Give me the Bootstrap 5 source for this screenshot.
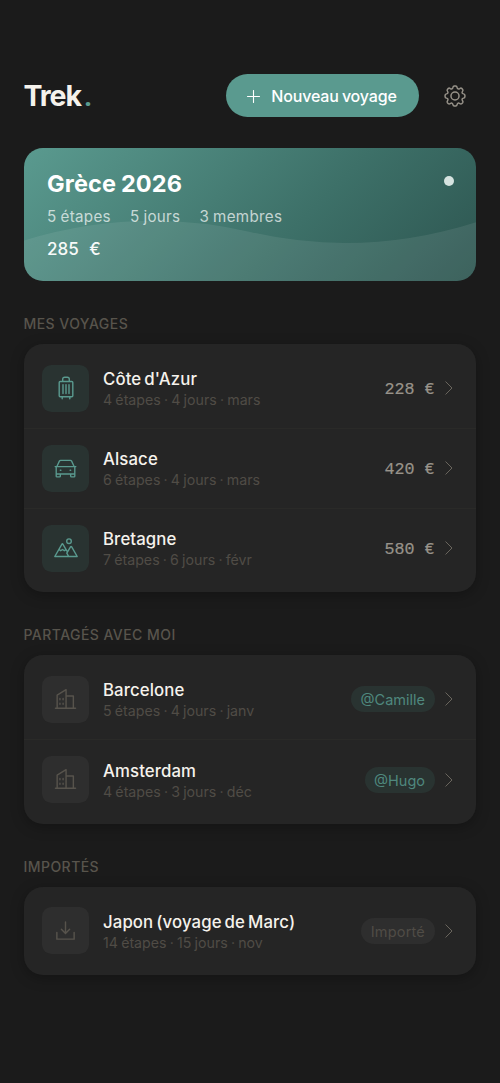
<!DOCTYPE html>
<html lang="fr" data-bs-theme="dark">
<head>
<meta charset="utf-8">
<meta name="viewport" content="width=device-width, initial-scale=1">
<title>Trek</title>
<link href="https://cdn.jsdelivr.net/npm/bootstrap@5.3.0/dist/css/bootstrap.min.css" rel="stylesheet">
<style>
  :root { --teal: #5a9a8f; --muted: #504c46; --soft: #98938a; }
  body { background: #1b1b1b; color: #f5f2ec; font-family: "Inter", "Open Sans", sans-serif; min-height: 1083px; }
  svg { display: block; fill: none; stroke: currentColor; stroke-linecap: round; stroke-linejoin: round; }
  .screen { padding: 74px 24px 0 23.5px; }
  .topbar { height: 43px; }
  .brand-name { font-size: 28.5px; font-weight: 700; line-height: 43px; letter-spacing: -1.1px; }
  .brand-name span { font-family: Roboto, sans-serif; line-height: 1; color: var(--teal); margin-left: 3px; }
  .btn-new { --bs-btn-color: #fff; --bs-btn-bg: var(--teal); --bs-btn-border-width: 0; width: 193px; height: 43px; border-radius: 22px; font-size: 16px; font-weight: 500; letter-spacing: -.15px; word-spacing: -1px; padding: 1px 0 0; gap: 11px; }
  .btn-gear { width: 43px; height: 43px; color: var(--soft); margin-left: 14.5px; }
  .hero { margin-top: 31px; height: 133px; border-radius: 19px; overflow: hidden; background: linear-gradient(135deg, #5a9a8f 0%, #3d7068 60%, #2d5550 100%); }
  .hero-wave { width: 100%; height: 100%; }
  .hero-body { padding: 22px 23.5px; }
  .hero h1 { font-size: 23.5px; font-weight: 700; line-height: 28px; letter-spacing: .15px; word-spacing: -1px; margin: 0; }
  .hero-meta { gap: 19px; font-size: 15.2px; letter-spacing: .3px; word-spacing: -.6px; line-height: 20px; margin-top: 9px; color: rgba(255,255,255,.7); }
  .hero-price { font-size: 17px; font-weight: 500; line-height: 22px; margin-top: 11px; color: #f7faf9; word-spacing: 6px; }
  .hero-dot { width: 10px; height: 10px; margin: 27.500px 22.5px 0 0; background: #d6e3e0; }
  .group-title { font-size: 14px; font-weight: 500; line-height: 20px; letter-spacing: .45px; color: #58544c; margin: 33px 0 10px; }
  .trips { --bs-list-group-bg: transparent; background: #252525; border-radius: 19px; padding: 4.5px 0 3.3px; box-shadow: 0 3px 14px rgba(0,0,0,.28); }
  .trip { height: 80.2px; padding: 0 22.5px 0 18.5px; border: 0; border-bottom: 1px solid #2a2a28; background: none; color: inherit; }
  .trip:last-child { border-bottom-color: transparent; }
  .tile { width: 47px; height: 47px; border-radius: 9.5px; background: #2e2e2e; color: #57534c; margin-right: 14px; }
  .tile-own { background: #293331; color: var(--teal); }
  .trip-text { padding-top: 2px; }
  .trip-name { font-size: 16.8px; font-weight: 500; line-height: 22px; letter-spacing: .1px; word-spacing: -1.6px; }
  .trip-meta { font-size: 14.2px; line-height: 20px; word-spacing: -.8px; color: var(--muted); }
  .price { font-family: "Liberation Mono", monospace; font-size: 16.7px; color: var(--soft); padding-top: 2px; -webkit-text-stroke: .2px currentColor; }
  .tag { height: 26px; line-height: 27px; padding: 0 9.5px; border-radius: 13px; font-size: 14.5px; background: #2e2e2e; color: var(--muted); }
  .tag-plain { letter-spacing: .2px; }
  .tag-user { background: #293331; color: #4f887e; }
  .chev { width: 8px; height: 14px; margin-left: 10.5px; color: #6a665e; margin-right: .5px; }
</style>
</head>
<body>
<svg width="0" height="0" class="position-absolute">
  <symbol id="i-bag" viewBox="0 0 24 24"><path d="M8.700 5.500V3.200Q8.700 1.200 10.700 1.200h2.600Q15.300 1.200 15.300 3.200V5.500M6.200 5.500h11.600q1 0 1 1v13.200q0 1-1 1H6.200q-1 0-1-1V6.500q0-1 1-1zM9 8.600v9M12 8.600v9M15 8.600v9M8.200 20.700v2.100M15.800 20.700v2.100"/></symbol>
  <symbol id="i-car" viewBox="0 0 24 24"><path d="M1.200 10h1.800M21 10h1.800M3 10 5.600 4.300q.4-.8 1.300-.8h10.200q.9 0 1.300.8L21 10M3 10h18q.7 0 .7.800V20q0 .800-.8.800h-2.700q-.8 0-.8-.800v-2.300H6.600V20q0 .800-.8.800H3.100q-.8 0-.8-.800v-9.200q0-.8.700-.8zM2.300 17.700h19.400M6.600 13.800h.6M16.800 13.800h.6"/></symbol>
  <symbol id="i-mount" viewBox="0 0 24 24"><path d="M.8 20.500 7.800 8.300q.6-1 1.200 0l3.800 6.600M.8 20.500h22.400l-5.500-9.600q-.6-1-1.200 0l-3.700 6.200 1.900 3.400M4.900 13.400l1.800 1.300 1.900-1.200 1.700 1.200 1.500-1.100"/><circle cx="15" cy="5.200" r="2.300"/></symbol>
  <symbol id="i-city" viewBox="0 0 24 24"><path d="M1.500 21.200h21M3.300 21.200V7.500L12.600 1.800V21.200M12.600 8.300h7.600v12.900M6.200 11v1.200M9.500 11v1.200M6.200 15.800V17M9.500 15.800V17"/></symbol>
  <symbol id="i-down" viewBox="0 0 24 24"><path d="M3 14v7h18v-7M12 3v12M7.700 10.800l4.300 4.300 4.300-4.300" stroke-linejoin="miter"/></symbol>
  <symbol id="i-chev" viewBox="0 0 8 14"><path d="M.8.800 7 7 .8 13.200"/></symbol>
</svg>
<main class="screen">
  <header class="topbar d-flex align-items-center">
    <div class="brand-name me-auto">Trek<span>.</span></div>
    <button class="btn btn-new d-flex align-items-center justify-content-center" type="button">
      <svg width="13" height="13" viewBox="0 0 13 13" stroke-width="1.100"><path d="M6.500.500v12M.500 6.500h12"/></svg>
      <span>Nouveau voyage</span>
    </button>
    <button class="btn btn-gear border-0 p-0 d-flex align-items-center justify-content-center" type="button" aria-label="Réglages">
      <svg width="22" height="22" viewBox="0 0 24 24" stroke-width="1.600"><circle cx="12" cy="12" r="4.400"/><path d="M9.700 2.700Q10 1.200 11.200 1.200h1.600Q14 1.200 14.300 2.700 14.900 5.200 17.200 3.900 18.500 3 19.300 3.700L20.400 4.800Q21.100 5.600 20.200 6.900 18.800 9.100 21.300 9.700 22.800 10 22.800 11.200v1.600Q22.800 14 21.300 14.300 18.800 14.900 20.200 17.200 21.100 18.500 20.400 19.300L19.300 20.400Q18.500 21.100 17.200 20.200 14.900 18.800 14.300 21.300 14 22.800 12.800 22.800h-1.600Q10 22.800 9.700 21.300 9.100 18.800 6.900 20.200 5.600 21.100 4.800 20.400L3.700 19.300Q3 18.500 3.900 17.200 5.200 14.900 2.700 14.300 1.200 14 1.200 12.800v-1.600Q1.200 10 2.700 9.700 5.200 9.100 3.900 6.900 3 5.600 3.700 4.800L4.800 3.700Q5.600 3 6.900 3.900 9.100 5.200 9.700 2.700Z"/></svg>
    </button>
  </header>

  <section class="hero position-relative">
    <svg class="hero-wave position-absolute top-0 start-0" viewBox="0 0 453 133" preserveAspectRatio="none"><path d="M0 92.500Q113 58 226.500 84T453 74V133H0Z" fill="#fff" fill-opacity=".08" stroke="none"/></svg>
    <div class="hero-body position-relative">
      <h1>Grèce 2026</h1>
      <div class="hero-meta d-flex"><span>5 étapes</span><span>5 jours</span><span>3 membres</span></div>
      <div class="hero-price">285 €</div>
    </div>
    <span class="hero-dot rounded-circle position-absolute top-0 end-0"></span>
  </section>

  <h2 class="group-title">MES VOYAGES</h2>
  <div class="list-group trips">
    <a class="list-group-item trip d-flex align-items-center"><span class="tile tile-own d-flex align-items-center justify-content-center"><svg width="24" height="24" stroke-width="1.400"><use href="#i-bag"/></svg></span><div class="trip-text me-auto"><div class="trip-name">Côte d'Azur</div><div class="trip-meta">4 étapes · 4 jours · mars</div></div><span class="price">228 €</span><svg class="chev"><use href="#i-chev"/></svg></a>
    <a class="list-group-item trip d-flex align-items-center"><span class="tile tile-own d-flex align-items-center justify-content-center"><svg width="23" height="23" stroke-width="1.400"><use href="#i-car"/></svg></span><div class="trip-text me-auto"><div class="trip-name">Alsace</div><div class="trip-meta">6 étapes · 4 jours · mars</div></div><span class="price">420 €</span><svg class="chev"><use href="#i-chev"/></svg></a>
    <a class="list-group-item trip d-flex align-items-center"><span class="tile tile-own d-flex align-items-center justify-content-center"><svg width="24" height="24" stroke-width="1.400"><use href="#i-mount"/></svg></span><div class="trip-text me-auto"><div class="trip-name">Bretagne</div><div class="trip-meta">7 étapes · 6 jours · févr</div></div><span class="price">580 €</span><svg class="chev"><use href="#i-chev"/></svg></a>
  </div>

  <h2 class="group-title">PARTAGÉS AVEC MOI</h2>
  <div class="list-group trips">
    <a class="list-group-item trip d-flex align-items-center"><span class="tile d-flex align-items-center justify-content-center"><svg width="23" height="23" stroke-width="1.500"><use href="#i-city"/></svg></span><div class="trip-text me-auto"><div class="trip-name">Barcelone</div><div class="trip-meta">5 étapes · 4 jours · janv</div></div><span class="tag tag-user">@Camille</span><svg class="chev"><use href="#i-chev"/></svg></a>
    <a class="list-group-item trip d-flex align-items-center"><span class="tile d-flex align-items-center justify-content-center"><svg width="23" height="23" stroke-width="1.500"><use href="#i-city"/></svg></span><div class="trip-text me-auto"><div class="trip-name">Amsterdam</div><div class="trip-meta">4 étapes · 3 jours · déc</div></div><span class="tag tag-user">@Hugo</span><svg class="chev"><use href="#i-chev"/></svg></a>
  </div>

  <h2 class="group-title">IMPORTÉS</h2>
  <div class="list-group trips">
    <a class="list-group-item trip d-flex align-items-center"><span class="tile d-flex align-items-center justify-content-center"><svg width="23" height="23" stroke-width="1.500"><use href="#i-down"/></svg></span><div class="trip-text me-auto"><div class="trip-name">Japon (voyage de Marc)</div><div class="trip-meta">14 étapes · 15 jours · nov</div></div><span class="tag tag-plain">Importé</span><svg class="chev"><use href="#i-chev"/></svg></a>
  </div>
</main>
<script src="https://cdn.jsdelivr.net/npm/bootstrap@5.3.0/dist/js/bootstrap.bundle.min.js"></script>
</body>
</html>
